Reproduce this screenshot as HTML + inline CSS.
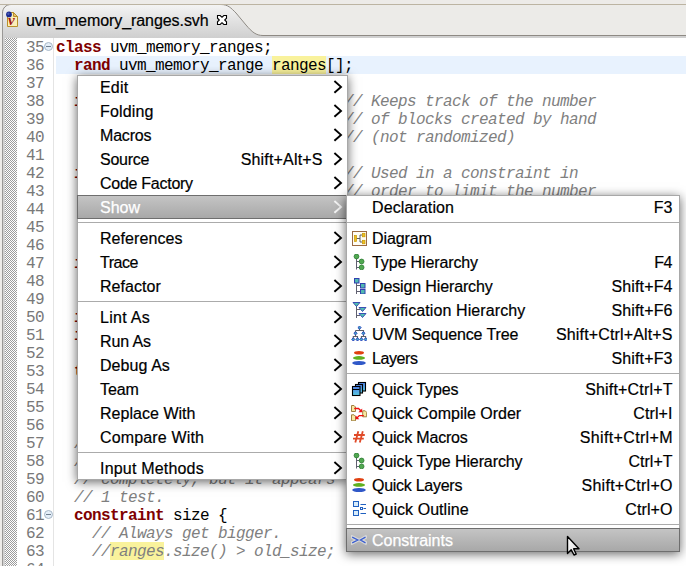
<!DOCTYPE html>
<html><head><meta charset="utf-8"><style>
*{margin:0;padding:0;box-sizing:border-box}
html,body{width:686px;height:566px;overflow:hidden;background:#edebe8;position:relative}
.abs{position:absolute}
#tabbar{position:absolute;left:0;top:0;width:686px;height:38px}
#editor{position:absolute;left:3px;top:38px;width:683px;height:528px;background:#fff}
.ln{position:absolute;left:0;width:44px;text-align:right;font:16px/18px "Liberation Mono",monospace;letter-spacing:-0.6px;color:#787878;height:18px;padding-top:1px}
.cl{position:absolute;left:56px;font:16px/18px "Liberation Mono",monospace;letter-spacing:-0.6px;white-space:pre;color:#000;height:18px;padding-top:1px}
.k{color:#800000;font-weight:bold}
.c{color:#7f7f7f;font-style:italic}
.h{}
.hc{color:#7f7f7f;font-style:italic}
.menu{position:absolute;background:#fff;border:1px solid #a8a8a8}
.mi{position:absolute;font:16px/24px "Liberation Sans",sans-serif;color:#000;white-space:pre;letter-spacing:0px;height:24px;padding-top:1px;-webkit-text-stroke:0.2px #000}
.hlt{-webkit-text-stroke:0.25px #fff}
.hlt{color:#fff}
.sep{position:absolute;height:1px;background:#ababab}
.hlbox{position:absolute;background:linear-gradient(#c4c4c4,#a8a8a8);border:1px solid #6e6e6e}
.arr{position:absolute}
.ic{position:absolute;width:16px;height:16px}
.ic svg{display:block}
</style></head><body>
<div id="tabbar">
 <svg class="abs" style="left:0;top:0" width="686" height="38">
  <defs><linearGradient id="tg" x1="0" y1="0" x2="0" y2="1"><stop offset="0" stop-color="#f4f4f4"/><stop offset="1" stop-color="#cfcfcf"/></linearGradient></defs>
  <rect x="0" y="4" width="686" height="34" fill="#ecebe8"/>
  <path d="M2.5 38V13C2.5 8 6 4.5 11 4.5H221C228 4.5 231 8 236 13L246 25C252 32 256 35.5 263 35.5H686V38Z" fill="url(#tg)"/>
  <path d="M2.5 38V13C2.5 8 6 4.5 11 4.5H221C228 4.5 231 8 236 13L246 25C252 32 256 35.5 263 35.5H686" fill="none" stroke="#8e8a84"/>
  <line x1="0" y1="4.5" x2="686" y2="4.5" stroke="#bcb4a2" stroke-width="1"/>
  <rect x="263" y="36" width="423" height="2" fill="#d0d0d0"/>
 </svg>
 <div class="abs" style="left:6px;top:11px;width:14px;height:17px">
  <svg width="14" height="17" viewBox="0 0 14 17"><path d="M1.5 1.5H7.5L11.5 5.5V15.5H1.5Z" fill="#fbeeb8" stroke="#b8902a"/><path d="M7.5 1.5V5.5H11.5Z" fill="#e8c070" stroke="#b8902a" stroke-linejoin="round"/><text x="2" y="14" font-family="Liberation Serif" font-style="italic" font-weight="bold" font-size="15" fill="#a01818">v</text><circle cx="3" cy="3.4" r="2.9" fill="#1a2a90"/><circle cx="2.4" cy="2.8" r="1.2" fill="#4a5ab0"/></svg>
 </div>
 <div class="abs" style="left:26px;top:9px;-webkit-text-stroke:0.2px #000;font:16px/24px 'Liberation Sans',sans-serif;letter-spacing:-0.07px;color:#000;white-space:pre">uvm_memory_ranges.svh</div>
 <svg class="abs" style="left:216px;top:14px" width="12" height="12" viewBox="0 0 12 12"><path d="M1.5 1.5H4.2L6 3.3L7.8 1.5H10.5V4.2L8.7 6L10.5 7.8V10.5H7.8L6 8.7L4.2 10.5H1.5V7.8L3.3 6L1.5 4.2Z" fill="#fff" stroke="#000" stroke-width="1.1" stroke-linejoin="miter"/></svg>
</div>
<div class="abs" style="left:2px;top:13px;width:1px;height:553px;background:#9a9896"></div>
<div id="editor">
</div>
<div class="abs" style="left:3px;top:38px;width:2px;height:528px;background:#d0d0d0"></div>
<div class="abs" style="left:5px;top:38px;width:12px;height:528px;background:repeating-conic-gradient(#9c9c9c 0 25%,#fff 0 50%) 0 0/2px 2px"></div>
<div class="abs" style="left:53px;top:38px;width:1px;height:528px;background:#e4e4e4"></div>
<div class="abs" style="left:56px;top:56px;width:630px;height:18px;background:#e8f2fe"></div>
<div class="abs" style="left:272px;top:56px;width:54px;height:18px;background:#f9f29c"></div>
<div class="abs" style="left:110px;top:542px;width:54px;height:18px;background:#f9f29c"></div>
<div class="abs" style="left:0;top:0">
<div class="ln" style="top:38px">35</div>
<div class="cl" style="top:38px"><span class="k">class</span><span class="n"> uvm_memory_ranges;</span></div>
<div class="ln" style="top:56px">36</div>
<div class="cl" style="top:56px"><span class="n">  </span><span class="k">rand</span><span class="n"> uvm_memory_range </span><span class="h">ranges</span><span class="n">[];</span></div>
<div class="ln" style="top:74px">37</div>
<div class="cl" style="top:74px"></div>
<div class="ln" style="top:92px">38</div>
<div class="cl" style="top:92px"><span class="n">  </span><span class="k">int</span><span class="n"> unsigned max_blocks;      </span><span class="c">// Keeps track of the number</span></div>
<div class="ln" style="top:110px">39</div>
<div class="cl" style="top:110px"><span class="n">                                </span><span class="c">// of blocks created by hand</span></div>
<div class="ln" style="top:128px">40</div>
<div class="cl" style="top:128px"><span class="n">                                </span><span class="c">// (not randomized)</span></div>
<div class="ln" style="top:146px">41</div>
<div class="cl" style="top:146px"></div>
<div class="ln" style="top:164px">42</div>
<div class="cl" style="top:164px"><span class="n">  </span><span class="k">int</span><span class="n"> unsigned n_blocks;        </span><span class="c">// Used in a constraint in</span></div>
<div class="ln" style="top:182px">43</div>
<div class="cl" style="top:182px"><span class="n">                                </span><span class="c">// order to limit the number</span></div>
<div class="ln" style="top:200px">44</div>
<div class="cl" style="top:200px"><span class="n">                                </span><span class="c">// of blocks</span></div>
<div class="ln" style="top:218px">45</div>
<div class="cl" style="top:218px"></div>
<div class="ln" style="top:236px">46</div>
<div class="cl" style="top:236px"></div>
<div class="ln" style="top:254px">47</div>
<div class="cl" style="top:254px"><span class="n">  </span><span class="k">int</span><span class="n"> unsigned x;</span></div>
<div class="ln" style="top:272px">48</div>
<div class="cl" style="top:272px"></div>
<div class="ln" style="top:290px">49</div>
<div class="cl" style="top:290px"></div>
<div class="ln" style="top:308px">50</div>
<div class="cl" style="top:308px"><span class="n">  </span><span class="k">int</span><span class="n"> unsigned y;</span></div>
<div class="ln" style="top:326px">51</div>
<div class="cl" style="top:326px"><span class="n">  </span><span class="k">int</span><span class="n"> unsigned z;</span></div>
<div class="ln" style="top:344px">52</div>
<div class="cl" style="top:344px"></div>
<div class="ln" style="top:362px">53</div>
<div class="cl" style="top:362px"><span class="n">  </span><span class="k">typedef</span><span class="n"> x;</span></div>
<div class="ln" style="top:380px">54</div>
<div class="cl" style="top:380px"></div>
<div class="ln" style="top:398px">55</div>
<div class="cl" style="top:398px"></div>
<div class="ln" style="top:416px">56</div>
<div class="cl" style="top:416px"></div>
<div class="ln" style="top:434px">57</div>
<div class="cl" style="top:434px"><span class="n">  </span><span class="c">// This constraint is not really</span></div>
<div class="ln" style="top:452px">58</div>
<div class="cl" style="top:452px"><span class="n">  </span><span class="c">// needed, and it could be removed</span></div>
<div class="ln" style="top:470px">59</div>
<div class="cl" style="top:470px"><span class="n">  </span><span class="c">// completely, but it appears</span></div>
<div class="ln" style="top:488px">60</div>
<div class="cl" style="top:488px"><span class="n">  </span><span class="c">// 1 test.</span></div>
<div class="ln" style="top:506px">61</div>
<div class="cl" style="top:506px"><span class="n">  </span><span class="k">constraint</span><span class="n"> size {</span></div>
<div class="ln" style="top:524px">62</div>
<div class="cl" style="top:524px"><span class="n">    </span><span class="c">// Always get bigger.</span></div>
<div class="ln" style="top:542px">63</div>
<div class="cl" style="top:542px"><span class="n">    </span><span class="c">//</span><span class="hc">ranges</span><span class="c">.size() &gt; old_size;</span></div>
<div class="ln" style="top:560px">64</div>
<div class="cl" style="top:560px"></div>
</div>
<svg class="abs" style="left:43px;top:41px" width="11" height="11" viewBox="0 0 11 11"><circle cx="5.5" cy="5.5" r="4" fill="#e4eef8" stroke="#a8b8c8"/><path d="M3 5.5H8" stroke="#708090"/></svg>
<svg class="abs" style="left:43px;top:509px" width="11" height="11" viewBox="0 0 11 11"><circle cx="5.5" cy="5.5" r="4" fill="#e4eef8" stroke="#a8b8c8"/><path d="M3 5.5H8" stroke="#708090"/></svg>
<div class="menu" style="left:77px;top:75px;width:271px;height:405px;box-shadow:0 2px 10px rgba(0,0,0,.6)"></div>
<div class="mi" style="left:100px;top:75px;letter-spacing:0.2px">Edit</div>
<svg class="arr" style="left:333px;top:80px" width="10" height="15"><path d="M1.4 1L8 6.9L1.4 12.8" stroke="#000" stroke-width="1.9" fill="none"/></svg>
<div class="mi" style="left:100px;top:99px;letter-spacing:0.17px">Folding</div>
<svg class="arr" style="left:333px;top:104px" width="10" height="15"><path d="M1.4 1L8 6.9L1.4 12.8" stroke="#000" stroke-width="1.9" fill="none"/></svg>
<div class="mi" style="left:100px;top:123px;letter-spacing:-0.2px">Macros</div>
<svg class="arr" style="left:333px;top:128px" width="10" height="15"><path d="M1.4 1L8 6.9L1.4 12.8" stroke="#000" stroke-width="1.9" fill="none"/></svg>
<div class="mi" style="left:100px;top:147px;letter-spacing:-0.26px">Source</div>
<div class="mi sc" style="right:363.32px;top:147px;letter-spacing:0.18px">Shift+Alt+S</div>
<svg class="arr" style="left:333px;top:152px" width="10" height="15"><path d="M1.4 1L8 6.9L1.4 12.8" stroke="#000" stroke-width="1.9" fill="none"/></svg>
<div class="mi" style="left:100px;top:171px;letter-spacing:-0.27px">Code Factory</div>
<svg class="arr" style="left:333px;top:176px" width="10" height="15"><path d="M1.4 1L8 6.9L1.4 12.8" stroke="#000" stroke-width="1.9" fill="none"/></svg>
<div class="hlbox" style="left:77px;top:195px;width:271px;height:24px"></div>
<div class="mi hlt" style="left:100px;top:195px;letter-spacing:0px">Show</div>
<svg class="arr" style="left:333px;top:200px" width="10" height="15"><path d="M1.4 1L8 6.9L1.4 12.8" stroke="#f4f4f4" stroke-width="1.9" fill="none"/></svg>
<div class="sep" style="left:78px;top:222px;width:269px"></div>
<div class="mi" style="left:100px;top:226px;letter-spacing:0.07px">References</div>
<svg class="arr" style="left:333px;top:231px" width="10" height="15"><path d="M1.4 1L8 6.9L1.4 12.8" stroke="#000" stroke-width="1.9" fill="none"/></svg>
<div class="mi" style="left:100px;top:250px;letter-spacing:-0.5px">Trace</div>
<svg class="arr" style="left:333px;top:255px" width="10" height="15"><path d="M1.4 1L8 6.9L1.4 12.8" stroke="#000" stroke-width="1.9" fill="none"/></svg>
<div class="mi" style="left:100px;top:274px;letter-spacing:0.06px">Refactor</div>
<svg class="arr" style="left:333px;top:279px" width="10" height="15"><path d="M1.4 1L8 6.9L1.4 12.8" stroke="#000" stroke-width="1.9" fill="none"/></svg>
<div class="sep" style="left:78px;top:301px;width:269px"></div>
<div class="mi" style="left:100px;top:305px;letter-spacing:0.28px">Lint As</div>
<svg class="arr" style="left:333px;top:310px" width="10" height="15"><path d="M1.4 1L8 6.9L1.4 12.8" stroke="#000" stroke-width="1.9" fill="none"/></svg>
<div class="mi" style="left:100px;top:329px;letter-spacing:-0.12px">Run As</div>
<svg class="arr" style="left:333px;top:334px" width="10" height="15"><path d="M1.4 1L8 6.9L1.4 12.8" stroke="#000" stroke-width="1.9" fill="none"/></svg>
<div class="mi" style="left:100px;top:353px;letter-spacing:0.07px">Debug As</div>
<svg class="arr" style="left:333px;top:358px" width="10" height="15"><path d="M1.4 1L8 6.9L1.4 12.8" stroke="#000" stroke-width="1.9" fill="none"/></svg>
<div class="mi" style="left:100px;top:377px;letter-spacing:-0.1px">Team</div>
<svg class="arr" style="left:333px;top:382px" width="10" height="15"><path d="M1.4 1L8 6.9L1.4 12.8" stroke="#000" stroke-width="1.9" fill="none"/></svg>
<div class="mi" style="left:100px;top:401px;letter-spacing:0.03px">Replace With</div>
<svg class="arr" style="left:333px;top:406px" width="10" height="15"><path d="M1.4 1L8 6.9L1.4 12.8" stroke="#000" stroke-width="1.9" fill="none"/></svg>
<div class="mi" style="left:100px;top:425px;letter-spacing:0.15px">Compare With</div>
<svg class="arr" style="left:333px;top:430px" width="10" height="15"><path d="M1.4 1L8 6.9L1.4 12.8" stroke="#000" stroke-width="1.9" fill="none"/></svg>
<div class="sep" style="left:78px;top:452px;width:269px"></div>
<div class="mi" style="left:100px;top:456px;letter-spacing:0.19px">Input Methods</div>
<svg class="arr" style="left:333px;top:461px" width="10" height="15"><path d="M1.4 1L8 6.9L1.4 12.8" stroke="#000" stroke-width="1.9" fill="none"/></svg>
<div class="menu" style="left:346px;top:195px;width:334px;height:357px;box-shadow:0 2px 10px rgba(0,0,0,.6)"></div>
<div class="mi" style="left:372px;top:195px;letter-spacing:0.1px">Declaration</div>
<div class="mi sc" style="right:13.5px;top:195px;letter-spacing:0.0px">F3</div>
<div class="sep" style="left:347px;top:222px;width:332px"></div>
<div class="mi" style="left:372px;top:226px;letter-spacing:-0.1px">Diagram</div>
<div class="ic" style="left:351px;top:230px"><svg width="16" height="16" viewBox="0 0 16 16"><rect x="1.5" y="1.5" width="14" height="14" fill="#fffdf4" stroke="#9a6a44"/><path d="M5.5 8.5H9M9 5V12M9 5H11.5M9 12H11.5" stroke="#606060" fill="none"/><rect x="3.5" y="5.5" width="2" height="6" fill="#f0c020" stroke="#c89800" stroke-width=".7"/><rect x="11.5" y="3.3" width="2.5" height="3.5" fill="#f0c020" stroke="#c89800" stroke-width=".7"/><rect x="11.5" y="10.3" width="2.5" height="3.5" fill="#f0c020" stroke="#c89800" stroke-width=".7"/></svg></div>
<div class="mi" style="left:372px;top:250px;letter-spacing:-0.12px">Type Hierarchy</div>
<div class="mi sc" style="right:14.0px;top:250px;letter-spacing:-0.5px">F4</div>
<div class="ic" style="left:351px;top:254px"><svg width="16" height="16" viewBox="0 0 16 16"><path d="M5.5 4V15.5M5.5 7.5H9M5.5 13.5H9" stroke="#606070" fill="none"/><circle cx="5.5" cy="2.5" r="2.4" fill="#50a850" stroke="#2a7a30" stroke-width=".8"/><circle cx="10.6" cy="7.5" r="2.4" fill="#50a850" stroke="#2a7a30" stroke-width=".8"/><circle cx="10.6" cy="13.4" r="2.4" fill="#50a850" stroke="#2a7a30" stroke-width=".8"/></svg></div>
<div class="mi" style="left:372px;top:274px;letter-spacing:-0.13px">Design Hierarchy</div>
<div class="mi sc" style="right:13.36px;top:274px;letter-spacing:0.14px">Shift+F4</div>
<div class="ic" style="left:351px;top:278px"><svg width="16" height="16" viewBox="0 0 16 16"><path d="M5.5 5V16M5.5 7.5H9.5M5.5 13.5H9.5" stroke="#606070" fill="none"/><rect x="3.5" y="0.5" width="4.5" height="4.5" fill="#50b8b0" stroke="#3040b0"/><rect x="9.5" y="5.5" width="4.5" height="4.5" fill="#50b8b0" stroke="#3040b0"/><rect x="9.5" y="11.5" width="4.5" height="4.5" fill="#50b8b0" stroke="#3040b0"/></svg></div>
<div class="mi" style="left:372px;top:298px;letter-spacing:0.1px">Verification Hierarchy</div>
<div class="mi sc" style="right:13.36px;top:298px;letter-spacing:0.14px">Shift+F6</div>
<div class="ic" style="left:351px;top:302px"><svg width="16" height="16" viewBox="0 0 16 16"><path d="M5.5 4V16M5.5 7.5H9M5.5 13.5H9" stroke="#606070" fill="none"/><path d="M2 0.5H9L5.5 4.5Z" fill="#50c0b0" stroke="#3040b0" stroke-width=".9" stroke-linejoin="round"/><path d="M8 5.5H15L11.5 9.5Z" fill="#50c0b0" stroke="#3040b0" stroke-width=".9" stroke-linejoin="round"/><path d="M8 11.5H15L11.5 15.5Z" fill="#50c0b0" stroke="#3040b0" stroke-width=".9" stroke-linejoin="round"/></svg></div>
<div class="mi" style="left:372px;top:322px;letter-spacing:-0.14px">UVM Sequence Tree</div>
<div class="mi sc" style="right:13.35px;top:322px;letter-spacing:0.15px">Shift+Ctrl+Alt+S</div>
<div class="ic" style="left:351px;top:326px"><svg width="16" height="16" viewBox="0 0 16 16"><path d="M8.5 1.5V4.5M4.5 4.5H12.5V7M4.5 4.5V7M4.5 7.5V10.5M12.5 7.5V10.5M2.3 13V10.5H6.5V13M10.4 13V10.5H14.6V13" stroke="#606068" stroke-width="1.1" fill="none"/><path d="M8.5 0.0L10.1 1.6L8.5 3.2L6.9 1.6Z" fill="#40b0c0" stroke="#2840c0" stroke-width="1"/><path d="M4.5 5.699999999999999L6.1 7.3L4.5 8.9L2.9 7.3Z" fill="#40b0c0" stroke="#2840c0" stroke-width="1"/><path d="M12.4 5.699999999999999L14.0 7.3L12.4 8.9L10.8 7.3Z" fill="#40b0c0" stroke="#2840c0" stroke-width="1"/><path d="M2.3 11.8L3.9 13.4L2.3 15.0L0.6999999999999997 13.4Z" fill="#40b0c0" stroke="#2840c0" stroke-width="1"/><path d="M6.5 11.8L8.1 13.4L6.5 15.0L4.9 13.4Z" fill="#40b0c0" stroke="#2840c0" stroke-width="1"/><path d="M10.4 11.8L12.0 13.4L10.4 15.0L8.8 13.4Z" fill="#40b0c0" stroke="#2840c0" stroke-width="1"/><path d="M14.6 11.8L16.2 13.4L14.6 15.0L13.0 13.4Z" fill="#40b0c0" stroke="#2840c0" stroke-width="1"/></svg></div>
<div class="mi" style="left:372px;top:346px;letter-spacing:-0.42px">Layers</div>
<div class="mi sc" style="right:13.36px;top:346px;letter-spacing:0.14px">Shift+F3</div>
<div class="ic" style="left:351px;top:350px"><svg width="16" height="16" viewBox="0 0 16 16"><ellipse cx="8" cy="2.8" rx="5" ry="1.8" fill="#e04010"/><ellipse cx="8" cy="7.9" rx="6" ry="1.8" fill="#60b020"/><ellipse cx="8" cy="13" rx="6.8" ry="2" fill="#3058c8"/></svg></div>
<div class="sep" style="left:347px;top:373px;width:332px"></div>
<div class="mi" style="left:372px;top:377px;letter-spacing:-0.12px">Quick Types</div>
<div class="mi sc" style="right:13.32px;top:377px;letter-spacing:0.18px">Shift+Ctrl+T</div>
<div class="ic" style="left:351px;top:381px"><svg width="16" height="16" viewBox="0 0 16 16"><defs><linearGradient id="qg" x1="0" y1="0" x2="0" y2="1"><stop offset="0" stop-color="#5080e8"/><stop offset="1" stop-color="#58c8e0"/></linearGradient></defs><rect x="7.5" y="1.5" width="7" height="8.5" fill="url(#qg)" stroke="#000" stroke-width="1.1"/><rect x="4.5" y="3.5" width="7" height="8.5" fill="url(#qg)" stroke="#000" stroke-width="1.1"/><rect x="1.5" y="5.5" width="7.5" height="9" fill="url(#qg)" stroke="#000" stroke-width="1.1"/><path d="M2 8.5H8.5" stroke="#000" stroke-width="1"/></svg></div>
<div class="mi" style="left:372px;top:401px;letter-spacing:-0.01px">Quick Compile Order</div>
<div class="mi sc" style="right:13.4px;top:401px;letter-spacing:0.1px">Ctrl+I</div>
<div class="ic" style="left:351px;top:405px"><svg width="16" height="16" viewBox="0 0 16 16"><path d="M0.5 0.5H3L4.5 2V6.5H0.5Z" fill="#f8e8a0" stroke="#a08040"/><path d="M0.5 9.8H3L4.5 11.3V15.8H0.5Z" fill="#f8e8a0" stroke="#a08040"/><path d="M11.7 5.8H14.2L15.7 7.3V11.8H11.7Z" fill="#f8e8a0" stroke="#a08040"/><path d="M3.2 3.5H7.5L9.8 5.8M12.8 10.6H8.3L5.9 13" stroke="#f01010" fill="none" stroke-width="1.3"/><path d="M7.4 7.2L11.2 3.4V7.2Z" fill="#f01010"/><path d="M4.6 10.4V14.2H8.4Z" fill="#f01010"/></svg></div>
<div class="mi" style="left:372px;top:425px;letter-spacing:-0.18px">Quick Macros</div>
<div class="mi sc" style="right:13.16px;top:425px;letter-spacing:0.34px">Shift+Ctrl+M</div>
<div class="ic" style="left:351px;top:429px"><svg width="16" height="16" viewBox="0 0 16 16"><path d="M7.3 2.2L4.3 13.5M11.8 2.2L8.8 13.5M3 6H13.8M2 9.6H12.8" stroke="#e04a28" stroke-width="1.8" fill="none"/></svg></div>
<div class="mi" style="left:372px;top:449px;letter-spacing:-0.11px">Quick Type Hierarchy</div>
<div class="mi sc" style="right:13.5px;top:449px;letter-spacing:0.0px">Ctrl+T</div>
<div class="ic" style="left:351px;top:453px"><svg width="16" height="16" viewBox="0 0 16 16"><path d="M5.5 4V15.5M5.5 7.5H9M5.5 13.5H9" stroke="#606070" fill="none"/><circle cx="5.5" cy="2.5" r="2.4" fill="#50a850" stroke="#2a7a30" stroke-width=".8"/><circle cx="10.6" cy="7.5" r="2.4" fill="#50a850" stroke="#2a7a30" stroke-width=".8"/><circle cx="10.6" cy="13.4" r="2.4" fill="#50a850" stroke="#2a7a30" stroke-width=".8"/></svg></div>
<div class="mi" style="left:372px;top:473px;letter-spacing:-0.27px">Quick Layers</div>
<div class="mi sc" style="right:13.23px;top:473px;letter-spacing:0.27px">Shift+Ctrl+O</div>
<div class="ic" style="left:351px;top:477px"><svg width="16" height="16" viewBox="0 0 16 16"><ellipse cx="8" cy="2.8" rx="5" ry="1.8" fill="#e04010"/><ellipse cx="8" cy="7.9" rx="6" ry="1.8" fill="#60b020"/><ellipse cx="8" cy="13" rx="6.8" ry="2" fill="#3058c8"/></svg></div>
<div class="mi" style="left:372px;top:497px;letter-spacing:0.05px">Quick Outline</div>
<div class="mi sc" style="right:13.4px;top:497px;letter-spacing:0.1px">Ctrl+O</div>
<div class="ic" style="left:351px;top:501px"><svg width="16" height="16" viewBox="0 0 16 16"><rect x="2.5" y="0.5" width="5" height="5" fill="#d8ecfa" stroke="#2060c0"/><rect x="2.5" y="9.5" width="5" height="5" fill="#d8ecfa" stroke="#2060c0"/><rect x="9.5" y="6.5" width="2" height="2" fill="#fff" stroke="#2060c0"/><path d="M9.5 3.5H15M12.5 7.5H15M9.5 12.5H15" stroke="#2060c0" fill="none"/></svg></div>
<div class="sep" style="left:347px;top:524px;width:332px"></div>
<div class="hlbox" style="left:346px;top:528px;width:334px;height:24px"></div>
<div class="mi hlt" style="left:372px;top:528px;letter-spacing:0.0px">Constraints</div>
<div class="ic" style="left:351px;top:532px"><svg width="16" height="16" viewBox="0 0 16 16"><path d="M1.2 5.2L6.8 8L1.2 10.8M14.5 5.2L9.5 8L14.5 10.8" stroke="#d8d8d8" stroke-width="3.6" fill="none" stroke-linecap="square"/><path d="M1.2 5.2L6.8 8L1.2 10.8M14.5 5.2L9.5 8L14.5 10.8" stroke="#3a5ed0" stroke-width="1.35" fill="none"/></svg></div>
<svg class="abs" style="left:566px;top:535px" width="16" height="24" viewBox="0 0 16 24"><defs><linearGradient id="cg" x1="0" y1="0" x2="1" y2="1"><stop offset="0" stop-color="#fff"/><stop offset="1" stop-color="#d8d8d8"/></linearGradient></defs><path d="M1.5 1.5V18.5L5.2 14.8L8 20L10.2 19L7.6 13.8H13Z" fill="url(#cg)" stroke="#000" stroke-width="1.4" stroke-linejoin="round"/></svg>
</body></html>
